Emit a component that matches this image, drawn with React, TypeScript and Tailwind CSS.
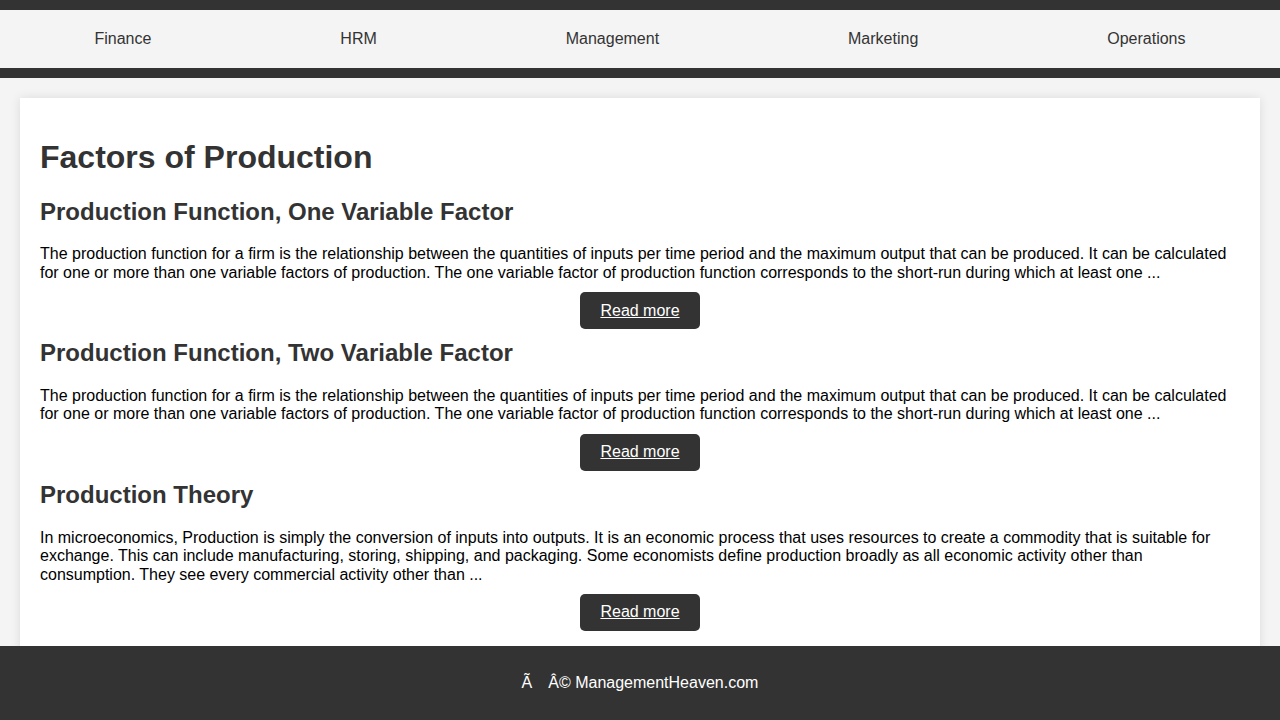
import React from 'react';

const articles = [
  {
    title: 'Production Function, One Variable Factor',
    text: 'The production function for a firm is the relationship between the quantities of inputs per time period and the maximum output that can be produced. It can be calculated for one or more than one variable factors of production. The one variable factor of production function corresponds to the short-run during which at least one ...',
  },
  {
    title: 'Production Function, Two Variable Factor',
    text: 'The production function for a firm is the relationship between the quantities of inputs per time period and the maximum output that can be produced. It can be calculated for one or more than one variable factors of production. The one variable factor of production function corresponds to the short-run during which at least one ...',
  },
  {
    title: 'Production Theory',
    text: 'In microeconomics, Production is simply the conversion of inputs into outputs. It is an economic process that uses resources to create a commodity that is suitable for exchange. This can include manufacturing, storing, shipping, and packaging. Some economists define production broadly as all economic activity other than consumption. They see every commercial activity other than ...',
  },
];

const navItems = ['Finance', 'HRM', 'Management', 'Marketing', 'Operations'];

export default function App() {
  return (
    <div className="min-h-screen bg-[#f4f4f4] font-['Liberation_Sans',Arial,sans-serif] text-base pb-[74px]">
      <header className="bg-[#333] py-[10px]">
        <nav className="bg-[#f4f4f4] h-[58px] flex items-center justify-around text-[#333]">
          {navItems.map((item) => (
            <a key={item} href="#" className="leading-[1.15]">
              {item}
            </a>
          ))}
        </nav>
      </header>

      <main className="m-[20px] bg-white p-[20px] shadow-[0_0_10px_rgba(0,0,0,0.1)]">
        <h1 className="text-[32px] font-bold text-[#333] leading-[1.15] mt-[21.44px] mb-[21.44px]">
          Factors of Production
        </h1>
        {articles.map((a, i) => (
          <article key={a.title}>
            <h2
              className={`text-[24px] font-bold text-[#333] leading-[1.15] mb-[19.92px] ${
                i === 0 ? 'mt-0' : 'mt-[10px]'
              }`}
            >
              {a.title}
            </h2>
            <p className="text-black leading-[1.15]">{a.text}</p>
            <div className="flex justify-center mt-[10px]">
              <a
                href="#"
                className="w-[120px] h-[37.5px] flex items-center justify-center bg-[#333] text-white underline rounded-[5px] leading-[1.15]"
              >
                Read more
              </a>
            </div>
          </article>
        ))}
        <div className="h-[10px]" />
      </main>

      <footer className="fixed bottom-0 left-0 right-0 h-[74px] bg-[#333] text-white flex items-center justify-center">
        <p className="leading-[1.15]">
          Ã<span className="inline-block w-[16px]" />Â© ManagementHeaven.com
        </p>
      </footer>
    </div>
  );
}
